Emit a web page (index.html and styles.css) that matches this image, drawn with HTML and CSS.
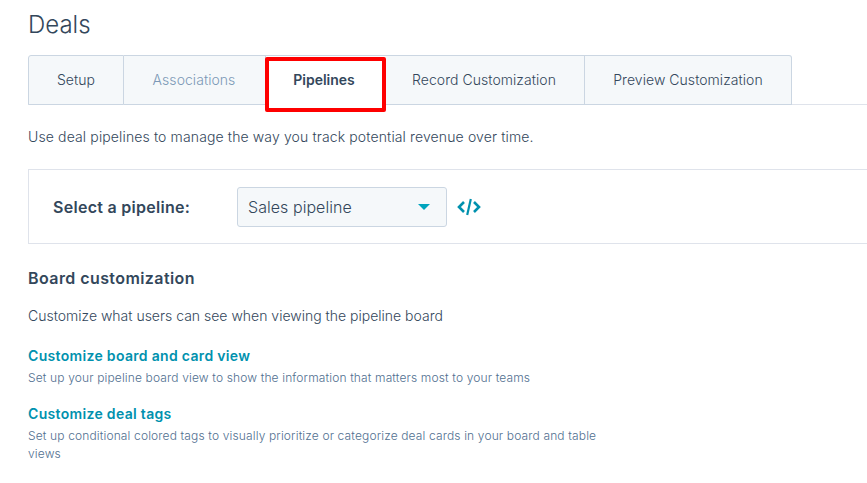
FILE: index.html
```html
<!DOCTYPE html>
<html lang="en">
<head>
<meta charset="utf-8">
<title>Deals</title>
<link rel="stylesheet" href="styles.css">
</head>
<body>
<main class="page">
  <h1 class="title">Deals</h1>
  <nav class="tabs">
    <a class="tab tab-first tab-setup">Setup</a>
    <a class="tab tab-assoc">Associations</a>
    <a class="tab tab-active">Pipelines<span class="highlight"></span></a>
    <a class="tab tab-record">Record Customization</a>
    <a class="tab tab-last tab-preview">Preview Customization</a>
  </nav>
  <p class="intro">Use deal pipelines to manage the way you track potential revenue over time.</p>
  <section class="panel">
    <label class="panel-label">Select a pipeline:</label>
    <div class="select">
      <span>Sales pipeline</span>
      <svg class="caret" width="12" height="6" viewBox="0 0 12 6"><path d="M0 0h12L6 6z" fill="#00a4bd"/></svg>
    </div>
    <svg class="code" width="24" height="18" viewBox="0 0 24 18" fill="none" stroke="#0091ae" stroke-width="2.600"><path d="M7 4L2 9l5 5M17 4l5 5-5 5"/><path d="M13.8 1L10.200 17" stroke-width="2.200"/></svg>
  </section>
  <h2 class="heading">Board customization</h2>
  <p class="sub">Customize what users can see when viewing the pipeline board</p>
  <div class="item">
    <a class="link">Customize board and card view</a>
    <p class="desc">Set up your pipeline board view to show the information that matters most to your teams</p>
  </div>
  <div class="item">
    <a class="link">Customize deal tags</a>
    <p class="desc">Set up conditional colored tags to visually prioritize or categorize deal cards in your board and table views</p>
  </div>
</main>
</body>
</html>
```
FILE: styles.css
```css
html, body { margin: 0; padding: 0; overflow: hidden; background: #fff; height: 100%; }
.page {
  width: 900px;
  padding: 0 0 0 28px;
  box-sizing: border-box;
  font-family: "Inter", "Liberation Sans", sans-serif;
  font-weight: 300;
  color: #33475b;
  font-size: 14px;
}
.title { margin: 0; padding-top: 9px; font-size: 24px; line-height: 32px; font-weight: 300; height: 46px; box-sizing: content-box; }
.tabs {
  display: flex;
  height: 50px;
  box-sizing: border-box;
  border-bottom: 1px solid #dfe3eb;
}
.tab {
  display: flex;
  align-items: center;
  justify-content: center;
  box-sizing: border-box;
  height: 50px;
  padding-bottom: 2px;
  background: #f5f8fa;
  border: 1px solid #cbd6e2;
  border-left: 0;
  font-size: 14px;
  letter-spacing: .05px;
  color: #33475b;
}
.tab-first { border-left: 1px solid #cbd6e2; border-top-left-radius: 3px; }
.tab-last { border-top-right-radius: 3px; }
.tab-setup { width: 96px; }
.tab-assoc { width: 142px; color: #7c98b6; padding-right: 1px; }
.tab-active { width: 120px; position: relative; background: #fff; border-bottom-color: #fff; font-weight: 600; border-right: 0; padding-right: 4px; letter-spacing: 0; }
.tab-record { width: 199px; border-left: 0; padding-right: 2px; }
.tab-preview { width: 207px; }
.highlight {
  position: absolute;
  left: -1px; top: 1px;
  width: 121px; height: 55px;
  box-sizing: border-box;
  border: 4px solid #fe0000;
  border-radius: 2px;
}
.intro { margin: 23px 0 0; line-height: 18px; height: 18px; font-size: 14px; letter-spacing: .13px; }
.panel {
  margin-top: 23px;
  height: 75px;
  box-sizing: border-box;
  border: 1px solid #dfe3eb;
  display: flex;
  align-items: center;
  padding-left: 24px;
}
.panel-label { width: 184px; font-size: 16px; font-weight: 600; letter-spacing: .28px; }
.select {
  width: 210px;
  height: 40px;
  box-sizing: border-box;
  display: flex;
  align-items: center;
  justify-content: space-between;
  padding: 0 16px 0 10px;
  background: #f5f8fa;
  border: 1px solid #cbd6e2;
  border-radius: 3px;
  font-size: 16px;
  letter-spacing: .05px;
}
.code { margin-left: 10px; }
.heading { margin: 24px 0 0; font-size: 16px; line-height: 20px; font-weight: 600; letter-spacing: .42px; }
.sub { margin: 19px 0 0; font-size: 14px; line-height: 18px; }
.item { margin-top: 22px; width: 575px; }
.item + .item { margin-top: 18px; }
.link { display: block; color: #0091ae; font-size: 14px; font-weight: 600; line-height: 18px; letter-spacing: .32px; }
.desc { margin: 4px 0 0; font-size: 12px; line-height: 18px; color: #516f90; letter-spacing: .14px; }
```
